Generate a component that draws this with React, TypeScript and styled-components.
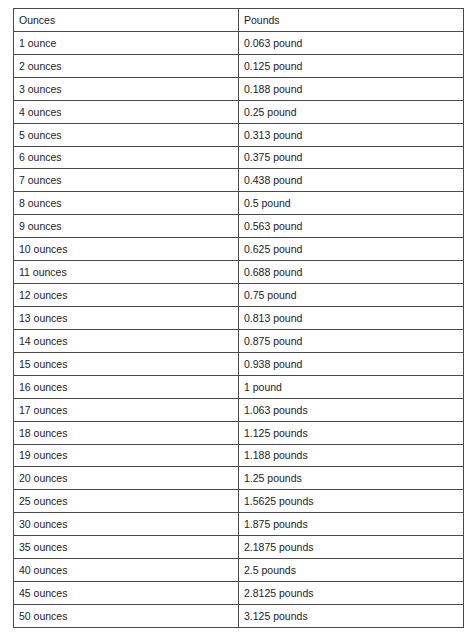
import React, { FC } from 'react';
import styled, { createGlobalStyle } from 'styled-components';

const GlobalStyle = createGlobalStyle`
    html, body {
        margin: 0;
        background: #ffffff;
    }
`;

const rows: [string, string][] = [
    ['1 ounce', '0.063 pound'],
    ['2 ounces', '0.125 pound'],
    ['3 ounces', '0.188 pound'],
    ['4 ounces', '0.25 pound'],
    ['5 ounces', '0.313 pound'],
    ['6 ounces', '0.375 pound'],
    ['7 ounces', '0.438 pound'],
    ['8 ounces', '0.5 pound'],
    ['9 ounces', '0.563 pound'],
    ['10 ounces', '0.625 pound'],
    ['11 ounces', '0.688 pound'],
    ['12 ounces', '0.75 pound'],
    ['13 ounces', '0.813 pound'],
    ['14 ounces', '0.875 pound'],
    ['15 ounces', '0.938 pound'],
    ['16 ounces', '1 pound'],
    ['17 ounces', '1.063 pounds'],
    ['18 ounces', '1.125 pounds'],
    ['19 ounces', '1.188 pounds'],
    ['20 ounces', '1.25 pounds'],
    ['25 ounces', '1.5625 pounds'],
    ['30 ounces', '1.875 pounds'],
    ['35 ounces', '2.1875 pounds'],
    ['40 ounces', '2.5 pounds'],
    ['45 ounces', '2.8125 pounds'],
    ['50 ounces', '3.125 pounds'],
];

const Page = styled.div`
    padding: 8px 0 0 13px;
`;

const Table = styled.table`
    width: 451px;
    border-collapse: collapse;
    table-layout: fixed;
    font-family: 'Liberation Sans', Arial, sans-serif;
    font-size: 10.5px;
    color: #222222;
`;

const Cell = styled.td`
    height: 21.93px;
    padding: 0 5px;
    border: 1px solid #4a4a4a;
    vertical-align: middle;
    white-space: nowrap;
`;

const App: FC = () => {
    return (
        <Page>
            <GlobalStyle />
            <Table>
                <tbody>
                    <tr>
                        <Cell>Ounces</Cell>
                        <Cell>Pounds</Cell>
                    </tr>
                    {rows.map(([oz, lb]) => (
                        <tr key={oz}>
                            <Cell>{oz}</Cell>
                            <Cell>{lb}</Cell>
                        </tr>
                    ))}
                </tbody>
            </Table>
        </Page>
    );
};

export default App;
